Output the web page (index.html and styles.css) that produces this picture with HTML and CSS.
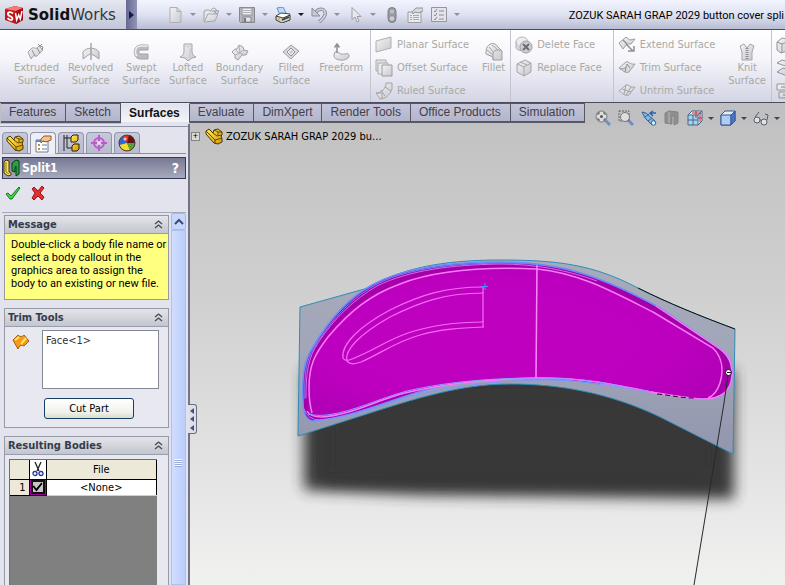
FILE: index.html
```
<!DOCTYPE html>
<html lang="en">
<head>
<meta charset="utf-8">
<title>SolidWorks</title>
<link rel="stylesheet" href="styles.css">
</head>
<body>
<svg class="defs" aria-hidden="true">
  <defs>
    <linearGradient id="silver" x1="0" y1="0" x2="1" y2="1"><stop offset="0" stop-color="#f4f4f6"/><stop offset="1" stop-color="#c9c9cd"/></linearGradient>
    <linearGradient id="gold" x1="0" y1="0" x2="1" y2="1"><stop offset="0" stop-color="#ffe95c"/><stop offset="1" stop-color="#d99a00"/></linearGradient>
    <symbol id="part" viewBox="0 0 18 18"><path d="M1 4l3-2 4 4 1-3 4-1 4 3v3l-1 1 1 3v3l-4 2-4-1L1 7z" fill="url(#gold)" stroke="#4a3500"/><path d="M1 4l9 9 7-2M10 13v4M8 6l4 3 4-1M9 3l4 2 4 0M13 5v3" fill="none" stroke="#5f4700"/></symbol>
    <symbol id="up" viewBox="0 0 9 9"><path d="M1 4l3.500-3L8 4M1 8l3.500-3L8 8" fill="none" stroke="#454953" stroke-width="1.300"/></symbol>
  </defs>
</svg>

<header class="titlebar">
  <div class="brand">
    <svg class="cube" viewBox="0 0 20 20" aria-hidden="true"><path d="M1 4l10-3 8 2v12l-7 4-11-4z" fill="#c5151c"/><path d="M1 4l10-3 8 2-7 3z" fill="#f47a72"/><path d="M12 6l7-3v12l-7 4z" fill="#a80c14"/><path d="M9 8.500C6 6 3 7.500 4 9.500s5 2 4.500 4.200S5 15 3.500 13" fill="none" stroke="#fff" stroke-width="1.800"/><path d="M11.500 8l1.200 7 2-5 1.600 4L18 6" fill="none" stroke="#fff" stroke-width="1.500"/></svg>
    <span class="wordmark"><b>Solid</b>Works</span>
  </div>
  <button class="brand-menu" aria-label="Show menu"></button>
  <div class="quick">
    <button class="ic" aria-label="New"><svg viewBox="0 0 16 16"><path d="M3 .5h7l4 4v11H3z" fill="url(#silver)" stroke="#adaeb8"/><path d="M10 .5v4h4" fill="none" stroke="#adaeb8"/></svg></button><button class="caret" aria-label="New options"></button>
    <button class="ic" aria-label="Open"><svg viewBox="0 0 16 16"><path d="M1 14V4l2-1h3l1 1h5v3" fill="#e4e4e9" stroke="#a4a5ae"/><path d="M1 15L5 7h10l-3 7z" fill="url(#silver)" stroke="#a4a5ae"/><path d="M8 3c2-3 5-2 6 1M11 4h5l-2 3z" fill="none" stroke="#9b9ca6"/></svg></button><button class="caret" aria-label="Open options"></button>
    <button class="ic" aria-label="Save"><svg viewBox="0 0 16 16"><path d="M.5.5h15v15h-14l-1-1z" fill="#b5b6be" stroke="#858690"/><path d="M3 1h10v7H3z" fill="#ececf0" stroke="#93949c"/><path d="M4 3.500h8M4 5.500h8" stroke="#b3b3bb"/><path d="M4 10h8v5H4z" fill="#e4e4e8" stroke="#85868f"/><path d="M6 11v4" stroke="#777" stroke-width="2"/></svg></button><button class="caret" aria-label="Save options"></button>
    <button class="ic" aria-label="Print"><svg viewBox="0 0 16 16"><path d="M2 1l6-1 3 6-6 2z" fill="#b9dcff" stroke="#5e90c4"/><path d="M1 9l5-3 9 1-2 3-8 2z" fill="#fff" stroke="#464646"/><path d="M1 9v4l6 3 8-3V8l-7 3z" fill="#d4d4c4" stroke="#3a3a3a"/><path d="M7 13l7-3" stroke="#3a3a3a" stroke-width="1.500"/><circle cx="4" cy="12" r="1" fill="#d8b400"/></svg></button><button class="caret dark" aria-label="Print options"></button>
    <button class="ic" aria-label="Undo"><svg viewBox="0 0 16 16"><path d="M3 7l4-4c4-2 8 0 7 5-1 3-3 5-6 7" fill="none" stroke="#8c8d98" stroke-width="3.500"/><path d="M3 7l4-4c4-2 8 0 7 5-1 3-3 5-6 7" fill="none" stroke="#d3d4de" stroke-width="1.500"/><path d="M1 1v8h8z" fill="#c8c9d3" stroke="#8c8d98"/></svg></button><button class="caret" aria-label="Undo options"></button>
    <button class="ic" aria-label="Select"><svg viewBox="0 0 16 16"><path d="M5 .5v12l3-2.500 2 5 2-1-2-4.500h4z" fill="#e8e8ef" stroke="#9c9da8"/></svg></button><button class="caret" aria-label="Select options"></button>
    <button class="ic solo" aria-label="Rebuild"><svg viewBox="0 0 16 16"><rect x="5" y=".5" width="8" height="15" rx="4" fill="#96979f" stroke="#7d7e86"/><circle cx="9" cy="4.500" r="2.300" fill="#bbbcc3"/><circle cx="9" cy="11.500" r="2.300" fill="#cbccd2"/></svg></button>
    <button class="ic solo" aria-label="File properties"><svg viewBox="0 0 16 16"><path d="M1 5h13v10.500H1z" fill="#e9e9ee" stroke="#9b9ca4"/><path d="M3 8.500h2m1 0h6M3 10.500h2m1 0h6M3 12.500h2m1 0h6" stroke="#a9aab2"/><path d="M5 5l4-4 7 0v3l-5 2-3-1-2 2z" fill="#d8d8df" stroke="#94959e"/></svg></button>
    <button class="ic" aria-label="Options"><svg viewBox="0 0 16 16"><path d="M.5.5h15v14H.5z" fill="#e4e5ec" stroke="#94959f"/><path d="M3 4l1 1 2-3M3 8l1 1 2-3M3 12l1 1 2-3M8 4h5M8 8h5M8 12h5" fill="none" stroke="#888994"/></svg></button><button class="caret" aria-label="More options"></button>
  </div>
  <h1 class="doc-title">ZOZUK SARAH GRAP 2029 button cover spli</h1>
</header>

<nav class="ribbon" aria-label="Surface tools">
  <div class="group first">
    <button class="big"><svg viewBox="0 0 18 18"><path d="M1 9l4-4c2-1 3 1 5 0l2-2 4 4-6 6c-2 1-3-1-4 0l-2 3z" fill="url(#silver)" stroke="#a7a7aa"/><path d="M5 7l3 6M10 5l3 5M11 1l2 2 2-2M13 3l3 1-1 3" fill="none" stroke="#8f8f93"/></svg><span>Extruded<br>Surface</span></button>
    <button class="big"><svg viewBox="0 0 18 18"><path d="M1 16V9c3-5 13-5 16 0v7l-4-3c-3-2-6-2-8 0z" fill="url(#silver)" stroke="#a0a0a4"/><path d="M9 0v18" stroke="#808084" stroke-dasharray="5 1"/></svg><span>Revolved<br>Surface</span></button>
    <button class="big"><svg viewBox="0 0 18 18"><path d="M16 2H9c-9 0-9 14 0 14h7v-5H9c-3 0-3-4 0-4h7z" fill="#bcbcc0" stroke="#a1a1a5"/><path d="M16 3H9c-6 0-7 7-4 10" fill="none" stroke="#ededf0" stroke-width="1.500"/></svg><span>Swept<br>Surface</span></button>
    <button class="big"><svg viewBox="0 0 18 18"><path d="M5 1h8v7c0 3 1 5 4 6l-4 1-4 3-3-3-5-1c3-1 4-3 4-6z" fill="url(#silver)" stroke="#a5a5a9"/><path d="M5 2l4 2 4-2M11 5v9" fill="none" stroke="#c8c8cc"/></svg><span>Lofted<br>Surface</span></button>
    <button class="big"><svg viewBox="0 0 18 18"><path d="M1 9l3-3 2 0 2-4 4 2 1 3 4 1-2 4-4 0-4 5-3-2 0-3z" fill="url(#silver)" stroke="#a0a0a4"/><path d="M4 6l4 4 5-3M8 2l1 8 4 2M4 12l5-2" fill="none" stroke="#b1b1b5"/></svg><span>Boundary<br>Surface</span></button>
    <button class="big"><svg viewBox="0 0 18 18"><path d="M1 9l8-7 8 6-8 8z" fill="#d9d9dd" stroke="#a0a0a4"/><path d="M5 9l4-4 4 4-4 4z" fill="#f3f3f5" stroke="#909094"/><path d="M7 9l3-2 1 2-2 2z" fill="#c4c4c8"/></svg><span>Filled<br>Surface</span></button>
    <button class="big"><svg viewBox="0 0 18 18"><path d="M3 9c3-1 3 1 6 2s7-2 8 1-4 6-9 5-6-2-6-5z" fill="url(#silver)" stroke="#a0a0a4"/><path d="M5 10V2M2.500 4.500L5 1l2.500 3.500" fill="none" stroke="#8f8f93" stroke-width="1.500"/></svg><span>Freeform</span></button>
  </div>
  <div class="group">
    <div class="stack">
      <button class="small"><svg viewBox="0 0 18 18"><path d="M1 5l15-4v11L1 16z" fill="url(#silver)" stroke="#b0b0b4"/></svg>Planar Surface</button>
      <button class="small"><svg viewBox="0 0 18 18"><path d="M1 1h10v11H1z" fill="#e3e3e7" stroke="#ababaf"/><path d="M3 4h10v11H3z" fill="#ececef" stroke="#aaaaae"/><path d="M7 6h10v11H7z" fill="url(#silver)" stroke="#9c9ca0"/></svg>Offset Surface</button>
      <button class="small"><svg viewBox="0 0 18 18"><path d="M11 1h6v6c-2 6-7 10-12 10l-4-6c5 0 10-4 10-10z" fill="url(#silver)" stroke="#a4a4a8"/><path d="M1 11h6v6M6 8l4 6M10 5l6 4" fill="none" stroke="#a4a4a8"/></svg>Ruled Surface</button>
    </div>
    <button class="big after"><svg viewBox="0 0 18 18"><path d="M1 9c0-10 10-10 11-6l5 5v9H8v-3L1 11z" fill="url(#silver)" stroke="#9f9fa3"/><path d="M4 4l5 6M7 2l6 5M8 17v-6c0-4 5-5 9-3M2 7l6 5" fill="none" stroke="#a6a6aa"/></svg><span>Fillet</span></button>
  </div>
  <div class="group roomy">
    <div class="stack">
      <button class="small"><svg viewBox="0 0 18 18"><ellipse cx="7" cy="6" rx="6" ry="5" fill="#ededf0" stroke="#b7b7bb"/><path d="M1 6v6c2 3 6 3 8 2" fill="#d7d7db" stroke="#b0b0b4"/><circle cx="11" cy="11" r="6" fill="#cecfd2" stroke="#9f9fa3"/><path d="M8 8l6 6M14 8l-6 6" stroke="#6e6e72" stroke-width="2"/></svg>Delete Face</button>
      <button class="small"><svg viewBox="0 0 18 18"><path d="M2 5l8-4 6 3v9l-7 4-7-4z" fill="url(#silver)" stroke="#a5a5a9"/><path d="M2 5l7 3 7-4M9 8v9M5 3l7 3" fill="none" stroke="#a5a5a9"/></svg>Replace Face</button>
    </div>
  </div>
  <div class="group">
    <div class="stack">
      <button class="small"><svg viewBox="0 0 18 18"><path d="M1 7l7-6 4 3 5-1-4 5-4 0-4 5z" fill="url(#silver)" stroke="#9f9fa3"/><path d="M5 4l4 4M8 8l7 7M10 15h6v-5" fill="none" stroke="#929296" stroke-width="1.500"/></svg>Extend Surface</button>
      <button class="small"><svg viewBox="0 0 18 18"><path d="M1 9l7-6c3-1 4 3 9 2l-6 8c-4 2-6-2-10-4z" fill="url(#silver)" stroke="#9f9fa3"/><path d="M2 10c5 0 7-2 7-5l3 4M7 13l1-5" fill="none" stroke="#8f8f93"/></svg>Trim Surface</button>
      <button class="small"><svg viewBox="0 0 18 18"><path d="M1 9l7-6c3-1 4 3 9 2l-6 8c-4 2-6-2-10-4z" fill="url(#silver)" stroke="#a4a4a8"/><path d="M8 3l-2 9M13 5l-5 8M4 7l9 3" fill="none" stroke="#a4a4a8"/></svg>Untrim Surface</button>
    </div>
    <button class="big after"><svg viewBox="0 0 18 18"><path d="M2 3l4-2 3 4 3-4 4 2-2 6 0 8H4V9z" fill="url(#silver)" stroke="#a5a5a9"/><path d="M9 5v12" stroke="#8f8f93" stroke-width="3" stroke-dasharray="1 1"/></svg><span>Knit<br>Surface</span></button>
  </div>
  <div class="group more">
    <div class="stack">
      <button class="small" aria-label="Thicken"><svg viewBox="0 0 18 18"><path d="M1 6l5-4 11 2v9l-12 4-4-3z" fill="url(#silver)" stroke="#949498"/><path d="M1 6l5 2v9M6 8l9-4" fill="none" stroke="#949498"/></svg></button>
      <button class="small" aria-label="Thickened cut"><svg viewBox="0 0 18 18"><path d="M1 4l5-3 11 3-5 4zM1 13l6-4 10 3-6 5z" fill="url(#silver)" stroke="#949498"/></svg></button>
      <button class="small" aria-label="Cut with surface"><svg viewBox="0 0 18 18"><path d="M1 2h15v6H1zM3 10h12v6H3z" fill="url(#silver)" stroke="#949498"/><path d="M5 5h9M7 13h6" stroke="#87878b"/></svg></button>
    </div>
  </div>
</nav>

<div class="tabrow">
  <nav class="tabs" aria-label="Command tabs">
    <button>Features</button><button>Sketch</button><button class="on">Surfaces</button><button>Evaluate</button><button>DimXpert</button><button>Render Tools</button><button>Office Products</button><button>Simulation</button>
  </nav>
  <div class="viewbar">
    <button class="ic" aria-label="Zoom to fit"><svg viewBox="0 0 16 16"><path d="M10 10l5 5" stroke="#6f8ec8" stroke-width="3"/><circle cx="6.500" cy="6.500" r="5.500" fill="#dededf" stroke="#777"/><path d="M3 5V3h2M8 3h2v2M10 8v2H8M5 10H3V8" fill="none" stroke="#555"/><circle cx="6.500" cy="6.500" r="1.500" fill="#555"/></svg></button>
    <button class="ic" aria-label="Zoom to area"><svg viewBox="0 0 16 16"><path d="M10 10l5 5" stroke="#6f8ec8" stroke-width="3"/><path d="M1 1h10v10H1z" fill="none" stroke="#666" stroke-dasharray="2 1"/><circle cx="7" cy="7" r="4.500" fill="#dededf" stroke="#777"/></svg></button>
    <button class="ic" aria-label="Previous view"><svg viewBox="0 0 16 16"><path d="M1 2l4 1 9 8-3 4-7-7z" fill="#83b7e2" stroke="#2f659f"/><path d="M4 7l4-3M7 11l4-3" stroke="#2f659f"/><circle cx="12.500" cy="13" r="2.300" fill="#d7ecfc" stroke="#2f659f"/><path d="M9 3h6M12 1L9 3l3 3" fill="none" stroke="#2665b0" stroke-width="1.500"/></svg></button>
    <button class="ic" aria-label="Section view"><svg viewBox="0 0 16 16"><path d="M1 3l4-2 9 1v11l-4 2V6H8v8l-7-1z" fill="#8e8e8e" stroke="#858585"/><path d="M5 2v11" stroke="#a5a5a5" stroke-width="2"/></svg></button>
    <button class="ic tight" aria-label="View orientation"><svg viewBox="0 0 16 16"><path d="M1 5l4-4h10v10l-4 4H1z" fill="#eee7e9"/><path d="M1 5h10v10H1z" fill="#a9d2f0"/><path d="M9 1v7M5 3h9M13 3v9M11 8h4" stroke="#c23141"/><path d="M1 5h10v10H1zM1 5l4-4h10v10l-4 4M11 5l4-4M6 5v10M1 10h10" fill="none" stroke="#476684"/></svg></button><button class="caret view" aria-label="Orientation options"></button>
    <button class="ic tight" aria-label="Display style"><svg viewBox="0 0 16 16"><path d="M1 5l4-4h10v10l-4 4H1z" fill="#e4edf9" stroke="#345996"/><path d="M1 5h10v10H1z" fill="#b0ccf5" stroke="#345996"/><path d="M11 5l4-4v10l-4 4z" fill="#4778cf" stroke="#345996"/></svg></button><button class="caret view" aria-label="Display options"></button>
    <button class="ic tight" aria-label="Hide or show items"><svg viewBox="0 0 16 16"><circle cx="4" cy="10" r="3" fill="#dfe3e6" stroke="#555e66"/><circle cx="11" cy="12" r="3" fill="#dfe3e6" stroke="#555e66"/><path d="M2 7l4-5M7 10h1M14 10l1-5-3-1" fill="none" stroke="#555e66"/></svg></button><button class="caret view" aria-label="Visibility options"></button>
  </div>
</div>

<main class="work">
  <aside class="panel">
    <div class="ptabs">
      <button aria-label="Feature tree"><svg viewBox="0 0 18 18"><use href="#part"/></svg></button>
      <button class="on" aria-label="Property manager"><svg viewBox="0 0 18 18"><path d="M2 5h12v12H2z" fill="#fff" stroke="#6b7a94"/><path d="M2 6h12" stroke="#5886cf" stroke-width="2"/><path d="M4 10h2M4 14h2" stroke="#d08b21" stroke-width="2"/><path d="M8 10h5M8 14h5" stroke="#647da8"/><path d="M7 4l3-3h7v4l-5 2-3-1-2 2z" fill="#f3c48b" stroke="#8d5a28"/></svg></button>
      <button aria-label="Configurations"><svg viewBox="0 0 18 18"><path d="M2 1v16M5 1v13M2 4h7M5 14h5" fill="none" stroke="#222"/><path d="M9 3l2-2h5v5l-2 2H9zM10 12l2-2h5v5l-2 2h-5z" fill="url(#gold)" stroke="#2a1e00"/></svg></button>
      <button aria-label="Dimensions"><svg viewBox="0 0 18 18"><circle cx="9" cy="9" r="5" fill="none" stroke="#bf58cb" stroke-width="2"/><path d="M9 1v16M1 9h16" stroke="#bf58cb" stroke-width="2"/><circle cx="9" cy="9" r="2" fill="#eed8f2"/></svg></button>
      <button aria-label="Display manager"><svg viewBox="0 0 18 18"><circle cx="9" cy="9" r="8" fill="#e83222"/><path d="M9 9L1.500 12A8 8 0 0 1 5 2z" fill="#2d68d5"/><path d="M9 9L1.500 11A8 8 0 0 0 12 16z" fill="#f5df2a"/><path d="M9 9l3 7.500A8 8 0 0 0 17 9z" fill="#52a533"/><path d="M9 9l2-8c3 0 6 4 6 8z" fill="#651511"/><circle cx="9" cy="9" r="8" fill="none" stroke="#4d4031"/><circle cx="7" cy="5" r="1.500" fill="#fff" opacity=".7"/></svg></button>
    </div>
    <div class="feature">
      <svg viewBox="0 0 18 18" aria-hidden="true"><path d="M1 3l2-2 3 1v11l2 1v2l-3 1-4-3z" fill="#f8e36a" stroke="#423400"/><path d="M3 3v10l3 2" fill="none" stroke="#8a7400"/><path d="M9 4l4-3 3 1v13l-3 2V7l-1 1v5l-3-1z" fill="#2ca046" stroke="#073d13"/></svg>
      <h2>Split1</h2>
      <button aria-label="Help">?</button>
    </div>
    <div class="confirm">
      <button aria-label="OK"><svg viewBox="0 0 16 16"><path d="M1 9l2-1 3 3 8-9 1 1-8 11H5z" fill="#46d345" stroke="#147d20"/></svg></button>
      <button aria-label="Cancel"><svg viewBox="0 0 16 16"><path d="M2 4l2-2 4 4 4-5 2 2-4 5 4 4-2 3-4-4-4 4-2-2 3-5z" fill="#e62d31" stroke="#96171c"/></svg></button>
    </div>
    <div class="scroller">
      <div class="sections">
        <section>
          <h3>Message<button aria-label="Collapse Message"><svg viewBox="0 0 9 9"><use href="#up"/></svg></button></h3>
          <p class="note">Double-click a body file name or<br>select a body callout in the<br>graphics area to assign the<br>body to an existing or new file.</p>
        </section>
        <section>
          <h3>Trim Tools<button aria-label="Collapse Trim Tools"><svg viewBox="0 0 9 9"><use href="#up"/></svg></button></h3>
          <div class="trim">
            <svg viewBox="0 0 18 18" aria-hidden="true"><path d="M1 7l5-5c2 2 4 2 6 0l5 6-5 5c-2-1-4-1-5 1l-1 2z" fill="#f49a1c" stroke="#a95a09"/><path d="M3 7l4-3M9 11l5-6" stroke="#ffe36a" stroke-width="2"/></svg>
            <select size="4" aria-label="Trim tools"><option>Face&lt;1&gt;</option></select>
          </div>
          <button class="cut">Cut Part</button>
        </section>
        <section class="grow">
          <h3>Resulting Bodies<button aria-label="Collapse Resulting Bodies"><svg viewBox="0 0 9 9"><use href="#up"/></svg></button></h3>
          <div class="sheet">
            <table>
              <thead><tr><th class="num"></th><th class="pick"><svg viewBox="0 0 12 16" aria-label="Cut"><path d="M3 1l4 9M9 1L5 10" fill="none" stroke="#222" stroke-width="1.300"/><circle cx="3" cy="12.500" r="2" fill="none" stroke="#26359a" stroke-width="1.300"/><circle cx="9" cy="12.500" r="2" fill="none" stroke="#26359a" stroke-width="1.300"/></svg></th><th>File</th></tr></thead>
              <tbody><tr><th class="num">1</th><td class="mark"><input type="checkbox" checked aria-label="Body 1"></td><td>&lt;None&gt;</td></tr></tbody>
            </table>
          </div>
        </section>
      </div>
      <div class="bar" aria-hidden="true"><div class="arrow"><svg viewBox="0 0 10 8"><path d="M1 6l4-4 4 4" fill="none" stroke="#384c75" stroke-width="2"/></svg></div><div class="thumb"><i></i></div></div>
    </div>
    <button class="handle" aria-label="Hide panel"><i></i><i></i><i></i></button>
  </aside>

  <div class="canvas">
    <svg class="model" viewBox="190 124 595 461" role="img" aria-label="Curved cover body with split surface">
      <defs>
        <filter id="soft" x="-10%" y="-20%" width="120%" height="140%"><feGaussianBlur stdDeviation="7"/></filter>
        <linearGradient id="plane" x1="0" y1="0" x2="0" y2="1"><stop offset="0" stop-color="#a7abb9"/><stop offset=".45" stop-color="#a1a6b9"/><stop offset="1" stop-color="#9296ae"/></linearGradient>
        <radialGradient id="body" cx=".45" cy=".5" r=".6"><stop offset="0" stop-color="#c000c0"/><stop offset=".7" stop-color="#bd00bf"/><stop offset="1" stop-color="#b200b7"/></radialGradient>
      </defs>
      <path d="M304 370H734V499L420 495 304 490z" fill="#303030" opacity=".96" filter="url(#soft)"/>
      <path d="M325 400H716V482H325z" fill="#383838" filter="url(#soft)"/>
      <path d="M300 307L368 288C400 269 440 260 500 260C560 260 594 265 638 288C668 303 700 316 735 329L733 454L660 417C610 393 560 384 510 384C455 384 405 402 345 421L298 436z" fill="url(#plane)" stroke="#2f8db5"/>
      <path d="M638 288C668 303 700 316 735 329" fill="none" stroke="#111"/>
      <path d="M303 400C302 376 304 360 313 347C330 318 350 297 372 285C404 267 450 262 500 262C560 262 600 275 660 308L720 349C729 356 732 363 732 374C732 392 720 400 700 399C665 396 635 388 600 384C540 375 470 378 425 390C385 402 350 418 312 421C304 418 303 410 303 400z" fill="#a300a8" stroke="#6d8eff" stroke-width="1.500"/>
      <path d="M308 407C309 380 309 366 317 353C332 324 360 299 390 287C430 270 490 267 537 269C580 273 615 293 653 312L713 348C722 357 724 370 720 383C717 392 712 397 701 398C650 395 600 379 536 378C480 377 440 385 400 395C370 404 350 414 315 417Q309 415 308 407z" fill="url(#body)"/>
      <path d="M306 398C306 373 308 358 318 343C334 318 355 299 377 286C410 270 450 265 500 264C535 264 567 270 597 281" fill="none" stroke="#d469ed"/>
      <path d="M305 399C304 375 306 360 314 348C332 318 354 296 379 283C410 268 455 263 510 263C565 264 600 277 656 306" fill="none" stroke="#6d86ff"/>
      <path d="M312 413Q309 402 309 388C309 366 314 355 328 337C350 311 370 295 400 284C439 269 491 267 537 269C580 273 615 293 653 312L713 348C722 357 724 370 720 383Q716 395 708 398" fill="none" stroke="#ff78fb" stroke-width="1.500"/>
      <path d="M656 306L720 349C729 356 732 363 732 374C732 392 720 400 700 399C665 396 635 388 600 384" fill="none" stroke="#ff74f8" stroke-width="1.500"/>
      <path d="M307 411Q310 417 322 417C351 415 374 401 405 393C445 383 490 379 535 378C580 377 620 385 665 395" fill="none" stroke="#ff78fb" stroke-width="1.500"/>
      <path d="M304 409Q308 420 320 420C352 418 378 406 412 396C455 385 500 381 540 380C580 379 615 387 653 392" fill="none" stroke="#8295ff"/>
      <path d="M308 414Q315 416 327 415C356 411 377 399 407 391C450 381 497 378 537 378C568 378 600 381 625 387" fill="none" stroke="#8aa0ff"/>
      <path d="M657 394C670 395 680 398 694 398" fill="none" stroke="#111" stroke-dasharray="5 3"/>
      <path d="M537 265L536 378" stroke="#ff86ff" stroke-width="1.500"/>
      <path d="M484 287C445 287 420 295 390 310C360 326 341 344 343 358Q345 362 352 359C375 350 385 341 408 333C432 325 457 322 484 322M484 293C445 293 420 302 390 317C360 334 344 350 347 361Q350 366 361 362C380 354 395 342 420 335C440 329 462 328 484 327M483 287V327" fill="none" stroke="#f56bf4" stroke-width="1.200"/>
      <path d="M485 283v7M481 286.500h7" stroke="#399bff"/>
      <path d="M728 375L724 403L694 585" fill="none" stroke="#292929"/>
      <circle cx="728.500" cy="372.500" r="3" fill="#fff" stroke="#111"/><path d="M727 372.500h4" stroke="#111"/>
    </svg>
    <div class="tree"><button class="plus" aria-label="Expand">+</button><svg viewBox="0 0 18 18" aria-hidden="true"><use href="#part"/></svg><span>ZOZUK SARAH GRAP 2029 bu...</span></div>
  </div>
</main>
</body>
</html>
```
FILE: styles.css
```
* { box-sizing: border-box; }

html, body { height: 100%; margin: 0; }

body {
  display: flex;
  flex-direction: column;
  overflow: hidden;
  background: #c4c4c4;
  color: #000;
  font: 11px/13px "DejaVu Sans Condensed", "Noto Sans", sans-serif;
}

button {
  margin: 0;
  padding: 0;
  border: 0;
  background: none;
  color: inherit;
  font: inherit;
}

svg { display: block; flex: none; }
h1, h2, h3, p { margin: 0; font-weight: normal; }
.defs { position: absolute; width: 0; height: 0; }

/* title bar */
.titlebar {
  display: flex;
  flex: none;
  height: 30px;
  border-bottom: 1px solid #4b4d60;
  background: linear-gradient(#f2f4ff, #dfe2f1 50%, #b9bdd3);
}

.brand {
  display: flex;
  align-items: center;
  flex: none;
  width: 126px;
  padding-left: 4px;
  gap: 4px;
  background: linear-gradient(#e5e7f1, #c3c6d7);
}

.cube { width: 20px; height: 20px; }
.wordmark { font: 15px/20px "DejaVu Sans", sans-serif; color: #34353d; }
.wordmark b { color: #111; }

.brand-menu {
  display: grid;
  place-items: center;
  flex: none;
  width: 11px;
  background: linear-gradient(90deg, #66698f, #9296b5);
}

.brand-menu::before {
  content: "";
  border: solid transparent;
  border-width: 4px 0 4px 5px;
  border-left-color: #15194f;
}

.quick { display: flex; align-items: center; flex: none; padding-left: 30px; }
.ic, .ic svg { width: 16px; height: 16px; }
.ic { flex: none; }
.solo { margin-right: 8px; }
.caret { display: grid; place-items: center; width: 20px; height: 16px; color: #8d8f9e; }

.caret::before {
  content: "";
  border: solid transparent;
  border-width: 3px 3px 0;
  border-top-color: currentColor;
}

.dark { color: #15182c; }

.doc-title {
  flex: 1;
  padding-right: 1px;
  font: 11px/32px Roboto, "Liberation Sans", sans-serif;
  text-align: right;
  white-space: nowrap;
}

/* ribbon */
.ribbon {
  display: flex;
  flex: none;
  height: 73px;
  overflow: hidden;
  border-bottom: 1px solid #4b4d5c;
  background: linear-gradient(#fff, #f5f5fb 40%, #d3d5e4);
  color: #a9a9a3;
}

.group { display: flex; flex: none; position: relative; padding: 3px 5px 0 4px; }
.group + .group { border-left: 1px solid #c3c4cd; }
.group.first { gap: 1px; padding: 3px 3px 0 10px; }
.group.roomy { padding-right: 11px; }

.big {
  display: flex;
  flex-direction: column;
  align-items: center;
  padding: 10px 4px 0;
  text-align: center;
  white-space: nowrap;
}

.big svg { width: 18px; height: 18px; }
.big.after { margin-left: 9px; padding-right: 0; }
.stack { display: flex; flex-direction: column; }
.small { display: flex; align-items: center; gap: 4px; height: 23px; white-space: nowrap; }
.small svg { width: 18px; height: 18px; }

/* command tabs and view tools */
.tabrow { display: flex; flex: none; height: 21px; background: #c0c0c2; }
.tabs { display: flex; flex: none; padding-left: 1px; }

.tabs button {
  height: 20px;
  padding: 0 9px 0 8px;
  border: solid #565866;
  border-width: 1px 1px 2px 0;
  background: linear-gradient(#c4c5da, #b3b5cb);
  color: #3f404a;
  font: 12px/17px "Liberation Sans", Arial, sans-serif;
}

.tabs .on {
  height: 21px;
  border-top-color: #e8e8f0;
  border-bottom-color: #e2e2ea;
  background: linear-gradient(#e1e2ed, #f4f4f8);
  color: #111;
  font-weight: bold;
}

.viewbar { display: flex; align-items: center; padding-left: 10px; height: 30px; }
.viewbar .ic { margin-right: 7px; position: relative; z-index: 2; }
.viewbar .tight { margin-right: 0; }
.view { position: relative; z-index: 2; width: 17px; color: #454545; }

/* property panel */
.work { display: flex; flex: 1; min-height: 0; }

.panel {
  display: flex;
  flex-direction: column;
  flex: none;
  position: relative;
  width: 190px;
  padding: 8px 2px 0;
  border-right: 2px solid #70738a;
  background: #e2e3ec;
}

.panel::before {
  content: "";
  position: absolute;
  inset: 2px 0 auto;
  border-top: 1px solid #9295aa;
}

.ptabs { display: flex; flex: none; gap: 2px; height: 22px; border-bottom: 1px solid #8b8ea6; }

.ptabs button {
  display: grid;
  place-items: center;
  width: 26px;
  height: 21px;
  border: 1px solid #9295ad;
  border-bottom: 0;
  border-radius: 4px 4px 0 0;
  background: linear-gradient(#c7c9da, #b9bbcf);
}

.ptabs .on { height: 22px; background: #eeeef5; }
.ptabs svg { width: 18px; height: 18px; }

.feature {
  display: flex;
  align-items: center;
  flex: none;
  height: 22px;
  margin-top: 3px;
  padding: 0 6px 0 0;
  gap: 1px;
  border: 1px solid #353958;
  background: linear-gradient(#777a94, #a7a9bc);
  color: #fff;
}

.feature svg { width: 18px; height: 18px; }
.feature h2 { flex: 1; font: bold 12px/18px "DejaVu Sans Condensed", sans-serif; }
.feature button { font: bold 14px/18px "DejaVu Sans Condensed", sans-serif; }

.confirm { display: flex; align-items: flex-start; flex: none; gap: 9px; height: 34px; padding: 6px 3px; border-bottom: 1px solid #a6a8b8; }
.confirm svg { width: 16px; height: 16px; }

.scroller { display: flex; flex: 1; min-height: 0; }
.sections { display: flex; flex-direction: column; flex: 1; gap: 8px; min-width: 0; padding: 2px 0 0 2px; }
.sections section { flex: none; border: 1px solid #969aa8; background: #e7e8f0; }
.sections .grow { display: flex; flex-direction: column; flex: 1; min-height: 0; border-bottom: 0; }

h3 {
  display: flex;
  align-items: center;
  justify-content: space-between;
  flex: none;
  height: 18px;
  padding: 0 5px 0 3px;
  border-bottom: 1px solid #9a9dab;
  background: linear-gradient(#e4e5e9, #c3c6cf);
  color: #343c4c;
  font: bold 11px/16px "DejaVu Sans Condensed", sans-serif;
}

h3 svg { width: 9px; height: 9px; }

.note {
  min-height: 65px;
  padding: 4px 0 8px 6px;
  background: #ffff80;
  font-family: Roboto, "Liberation Sans", sans-serif;
  white-space: nowrap;
}

.trim { display: flex; gap: 12px; padding: 3px 9px 0 7px; }
.trim > svg { width: 18px; height: 18px; margin-top: 3px; }

select {
  flex: 1;
  min-width: 0;
  height: 59px;
  padding: 0;
  border: 1px solid #858995;
  border-radius: 0;
  background: #fff;
  color: #333;
  font: inherit;
  outline: 0;
  overflow: hidden;
}

option { min-height: 0; padding: 3px 3px 0; }

.cut {
  display: block;
  width: 90px;
  height: 21px;
  margin: 9px 0 8px 39px;
  border: 1px solid #173e63;
  border-radius: 3px;
  background: linear-gradient(#fff, #f1f1ec 70%, #dadbd0);
}

.sheet {
  flex: 1;
  min-height: 0;
  margin: 4px 11px 0 4px;
  border: 1px solid #6f6f69;
  border-width: 1px 0 0 1px;
  background: #808080;
}

table { width: 100%; border-collapse: collapse; table-layout: fixed; background: #fff; }
th, td { height: 16px; padding: 0; border: 1px solid #000; border-width: 0 1px 1px 0; font-weight: normal; text-align: center; }
thead th { height: 19px; background: #ece9d8; }
.num { width: 19px; background: #ece9d8; }
tbody .num { padding-right: 3px; text-align: right; }
thead .pick { width: 17px; background: #fff; }
.pick svg { width: 12px; height: 16px; margin: auto; }
.mark { background: #a000a0; }
tbody td:last-child { border-bottom-color: #d0d0d0; }

input {
  display: block;
  appearance: none;
  width: 14px;
  height: 14px;
  margin: 0 auto;
  border: 2px solid #111;
  background: #c6c6c6;
}

input:checked::before {
  content: "";
  display: block;
  width: 10px;
  height: 10px;
  background: #000;
  clip-path: polygon(0 45%, 15% 35%, 38% 65%, 88% 5%, 100% 18%, 40% 95%);
}

.bar { display: flex; flex-direction: column; flex: none; width: 15px; margin-left: 2px; background: #dfe6f7; }

.arrow {
  display: grid;
  place-items: center;
  height: 17px;
  border: 1px solid #a5b9e5;
  border-radius: 2px;
  background: #c6d6fc;
}

.arrow svg { width: 10px; height: 8px; }
.thumb { display: grid; place-items: center; flex: 1; border: 1px solid #adc1ed; background: linear-gradient(90deg, #d0ddff, #bacdfb); }

.thumb i {
  width: 7px;
  height: 8px;
  margin-top: 110px;
  background: repeating-linear-gradient(#f5f8ff 0 1px, #95abd9 1px 2px);
}

.handle {
  display: flex;
  flex-direction: column;
  justify-content: space-evenly;
  align-items: center;
  position: absolute;
  z-index: 2;
  top: 280px;
  right: -9px;
  width: 9px;
  height: 30px;
  border: 1px solid #6b6d83;
  border-left: 0;
  border-radius: 0 3px 3px 0;
  background: #dedfe8;
}

.handle i { border: solid transparent; border-width: 3px 4px 3px 0; border-right-color: #4a4e7a; }

/* graphics area */
.canvas {
  flex: 1;
  min-width: 0;
  position: relative;
  overflow: hidden;
  background: linear-gradient(#c2c2c2, #d0d0d0 38%, #e3e3e3 74%, #f1f1f0);
}

.model { width: 100%; height: 100%; }
.tree { display: flex; align-items: center; position: absolute; top: 3px; left: 1px; height: 18px; }
.tree svg { width: 18px; height: 18px; margin: 0 3px 0 5px; }
.plus { width: 9px; height: 9px; border: 1px solid #858585; background: #dadada; font: 9px/7px "Liberation Sans", sans-serif; }
```
